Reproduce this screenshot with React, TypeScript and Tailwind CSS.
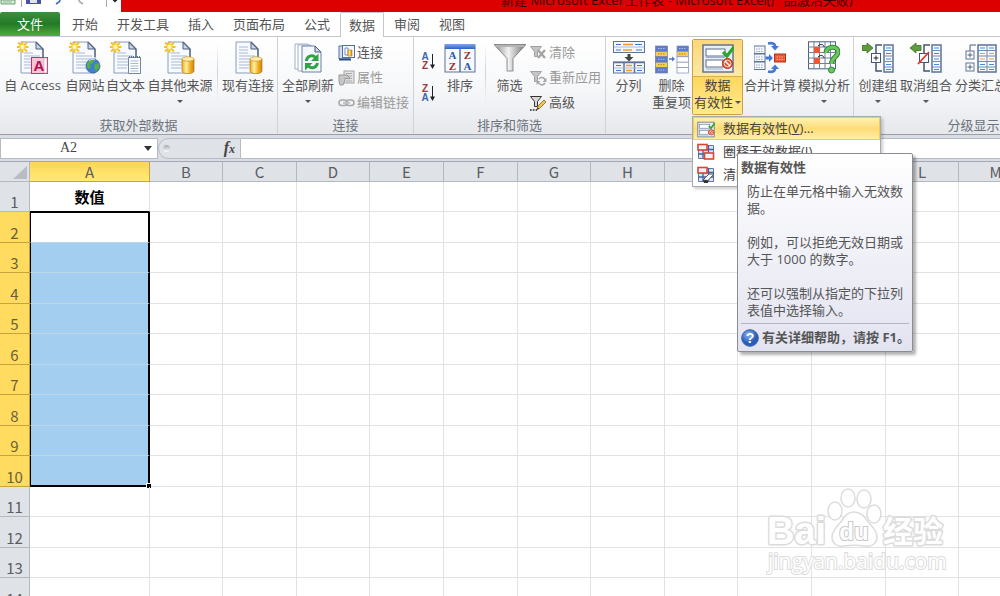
import type { ReactNode } from "react";
import clsx from "clsx";

const tabs = ["开始", "开发工具", "插入", "页面布局", "公式", "数据", "审阅", "视图"];
const activeTab = "数据";

const columns = "BCDEFGHIJKLMNOPQRSTUVWXYZ".split("");
// columns repeat 73/74px so the grid stays on whole pixels
const columnWidths = ["w-[73px]", "w-[74px]", "w-[73px]", "w-[74px]", "w-[74px]"];
const rows = Array.from({ length: 40 }, (_, i) => i + 1);

/* ---------- icons ---------- */

const Svg = ({ children, className = "w-8 h-[33px]", box = "0 0 32 33" }: { children: ReactNode; className?: string; box?: string }) => (
  <svg className={clsx("block shrink-0", className)} viewBox={box} fill="none" aria-hidden="true">
    {children}
  </svg>
);

const Sheet = ({ star = true }: { star?: boolean }) => (
  <>
    <path d="M4 1h15l7 7v24H4z" fill="#f7fafe" stroke="#8a9cb8" />
    <path d="M19 1v7h7z" fill="#c9d6ea" stroke="#4e5f7d" />
    <path d="M19 1l7 7v8" stroke="#4e5f7d" strokeWidth="1.3" />
    <path d="M7 12h9M7 15h16M7 18h16M7 21h16M7 24h16M7 27h10" stroke="#a9b9d4" />
    {star ? (
      <>
        <path d="M5.500 0v12M-.5 6h12M1 1.500l9 9M10 1.500l-9 9" stroke="#f5c21b" strokeWidth="1.800" />
        <circle cx="5.500" cy="6" r="2.500" fill="#fff8b8" stroke="#f8d84c" />
      </>
    ) : (
      <path d="M7 6h9M7 9h9" stroke="#a9b9d4" />
    )}
  </>
);

const Cylinder = () => (
  <>
    <path d="M18 18v12c0 3.500 12 3.500 12 0V18z" fill="url(#gold)" stroke="#b87d12" strokeWidth=".7" />
    <ellipse cx="24" cy="18" rx="6" ry="2.200" fill="#fff0b0" stroke="#c9922a" strokeWidth=".7" />
  </>
);

const Gradients = () => (
  <svg className="absolute w-0 h-0" aria-hidden="true">
    <defs>
      <linearGradient id="gold">
        <stop stopColor="#f0a91c" />
        <stop offset=".35" stopColor="#fff0a0" />
        <stop offset=".7" stopColor="#f0ad22" />
        <stop offset="1" stopColor="#c98510" />
      </linearGradient>
      <linearGradient id="steel">
        <stop stopColor="#8c8c8c" />
        <stop offset=".45" stopColor="#f2f2f2" />
        <stop offset="1" stopColor="#6e6e6e" />
      </linearGradient>
      <linearGradient id="blueBar" x2="0" y2="1">
        <stop stopColor="#7fa8ee" />
        <stop offset="1" stopColor="#2c62c4" />
      </linearGradient>
      <radialGradient id="help" cx=".4" cy=".3">
        <stop stopColor="#8fb4f0" />
        <stop offset="1" stopColor="#2a5bb8" />
      </radialGradient>
    </defs>
  </svg>
);

const AccessIcon = () => (
  <Svg>
    <Sheet />
    <rect x="14.500" y="16.500" width="16" height="16" fill="#f9c4d6" stroke="#c4326a" />
    <path d="M27 17h3v15h-3z" fill="#fff" stroke="#e08aa8" strokeWidth=".6" />
    <text x="22" y="30" fontFamily="Liberation Sans, sans-serif" fontWeight="bold" fontSize="15" textAnchor="middle" fill="#b0104e">
      A
    </text>
  </Svg>
);

const WebIcon = () => (
  <Svg>
    <Sheet />
    <circle cx="24" cy="25" r="7" fill="#3f7fd2" stroke="#285a9c" strokeWidth=".7" />
    <path d="M19 21c2-3 5-3 6-2l-1 3-3 1 1 3-2 2c-2-1-3-4-1-7zM26 23l4-1c1 3 0 6-3 8l-2-3z" fill="#57b041" />
    <path d="M20 20c2-2 4-2 6-1" stroke="#c9e4ff" />
  </Svg>
);

const TextIcon = () => (
  <Svg>
    <Sheet />
    <path d="M18.500 16.500h12v16h-12z" fill="#fdfdfe" stroke="#7388a8" />
    <path d="M19 16h12" stroke="#5c6f8e" strokeWidth="2" strokeDasharray="1 1" />
    <path d="M20.500 20h8M20.500 22.500h8M20.500 25h8M20.500 27.500h8M20.500 30h8" stroke="#a9b9d4" />
  </Svg>
);

const SourcesIcon = ({ star = true }: { star?: boolean }) => (
  <Svg>
    <Sheet star={star} />
    <Cylinder />
  </Svg>
);

const RefreshIcon = () => (
  <Svg>
    <path d="M3 3h13v25H3z" fill="#fff" stroke="#9fb0cb" />
    <path d="M6 4h13v26H6z" fill="#fff" stroke="#9fb0cb" />
    <path d="M10 5h13l6 6v20H10z" fill="#f4f8fd" stroke="#6b80a3" />
    <path d="M23 5v6h6z" fill="#c9d6ea" stroke="#4e5f7d" />
    <path d="M14.500 20c0-5 6-7 9-3.500" stroke="#2ca444" strokeWidth="3" />
    <path d="M26.500 12.500v7.500h-7.500z" fill="#2ca444" />
    <path d="M25.500 22c-1 5-6 6-9 3" stroke="#2ca444" strokeWidth="3" />
    <path d="M13 29.500v-7.500h7.500z" fill="#2ca444" />
  </Svg>
);

const SortIcon = () => (
  <Svg>
    <rect x="1" y="4" width="30" height="27" fill="#f6f9fe" stroke="#5d7298" />
    <rect x="1" y="3" width="30" height="5" fill="url(#blueBar)" />
    <path d="M16 8v23" stroke="#5d7298" strokeWidth="1.500" />
    <g fontFamily="Liberation Serif, serif" fontWeight="bold" fontSize="11" textAnchor="middle">
      <text x="8.500" y="18" fill="#2d55a6">A</text>
      <text x="8.500" y="28.500" fill="#a02c2c">Z</text>
      <text x="23.500" y="18" fill="#a02c2c">Z</text>
      <text x="23.500" y="28.500" fill="#2d55a6">A</text>
    </g>
  </Svg>
);

const SortOrder = ({ top, bottom }: { top: string; bottom: string }) => (
  <Svg className="w-4 h-5" box="0 0 16 20">
    <g fontFamily="Liberation Sans, sans-serif" fontWeight="bold" fontSize="10" textAnchor="middle">
      <text x="5" y="9" fill={top === "A" ? "#4266ac" : "#a13a40"}>{top}</text>
      <text x="5" y="18" fill={bottom === "A" ? "#4266ac" : "#a13a40"}>{bottom}</text>
    </g>
    <path d="M12.500 3v14" stroke="#222" />
    <path d="M10 13.500h5l-2.500 4.500z" fill="#222" />
  </Svg>
);

const FunnelIcon = () => (
  <Svg>
    <path d="M0 3.500h32L19 17.500v12.500h-6V17.500z" fill="url(#steel)" stroke="#777" strokeWidth=".8" />
    <path d="M1 4h30l-1.500 2h-27z" fill="#b4b4b4" />
  </Svg>
);

const SplitIcon = () => (
  <Svg>
    <rect x=".5" y=".5" width="31" height="11" fill="#f4f8fd" stroke="#5d7298" />
    <path d="M1 6h30" stroke="#a8b9d4" />
    <path d="M3 3.500h5M22 3.500h7M3 9h5M23 9h6" stroke="#3c76d8" strokeWidth="1.200" />
    <path d="M10 3.500h10M10 9h9" stroke="#f39a22" strokeWidth="1.500" />
    <path d="M16 13v5" stroke="#444" strokeWidth="3" />
    <path d="M11.500 16h9L16 20.500z" fill="#444" />
    <rect x=".5" y="21" width="31" height="11" fill="#f4f8fd" stroke="#5d7298" />
    <path d="M0 21.500h32M11 21v11M21.500 21v11" stroke="#5d7298" strokeWidth="1.500" />
    <path d="M1 27h30" stroke="#a8b9d4" />
    <path d="M3 24.500h5M3 29.500h5M24 24.500h5M24 29.500h5" stroke="#3c76d8" strokeWidth="1.200" />
    <path d="M13 24.500h6M13 29.500h6" stroke="#f39a22" strokeWidth="1.500" />
  </Svg>
);

const DuplicatesIcon = () => (
  <Svg className="w-[34px] h-[33px]" box="0 0 34 33">
    {["#5c7cd0", "#f7cf4a", "#5c7cd0", "#f7cf4a", "#5c7cd0"].map((fill, i) => (
      <g key={i}>
        <rect x=".5" y={5 + i * 5.4} width="12" height="5.400" fill={fill} stroke="#6f7ca6" strokeWidth=".7" />
        <path d={`M3 ${7.5 + i * 5.4}h7`} stroke={fill === "#f7cf4a" ? "#b08a1c" : "#a9bcf0"} strokeDasharray="1.500 1" />
      </g>
    ))}
    <path d="M14 18h5" stroke="#4f76d6" strokeWidth="1.500" />
    <path d="M17 15.500v5l3-2.500z" fill="#4f76d6" />
    {["#5c7cd0", "#f7cf4a", "#fff", "#fff", "#fff"].map((fill, i) => (
      <rect key={i} x="22" y={5 + i * 5.4} width="11.500" height="5.400" fill={fill} stroke="#7f8fb4" strokeWidth=".7" />
    ))}
    <path d="M24 7.500h7" stroke="#a9bcf0" strokeDasharray="1.500 1" />
    <path d="M24 13h7" stroke="#b08a1c" strokeDasharray="1.500 1" />
  </Svg>
);

const ValidationIcon = ({ className }: { className?: string }) => (
  <Svg className={className}>
    <rect x="1" y="4" width="30" height="27" fill="#e8eef8" stroke="#5c6c8c" strokeWidth="1.400" />
    <rect x="4" y="8" width="19" height="7" fill="#fff" stroke="#5c6c8c" />
    <rect x="4" y="19" width="17" height="7" fill="#fff" stroke="#5c6c8c" />
    <path d="M4 16.500h19M4 28h17" stroke="#9fb0cb" />
    <path d="M21 11l4 4 7-9" stroke="#2ea52c" strokeWidth="3.200" />
    <circle cx="25.500" cy="22.500" r="5" fill="#e9502d" stroke="#b73518" />
    <path d="M23 20l5 5" stroke="#fff" strokeWidth="1.400" />
    <circle cx="25.500" cy="22.500" r="3.300" stroke="#fff" strokeWidth=".8" />
  </Svg>
);

const ConsolidateIcon = () => (
  <Svg>
    {[5, 13, 21].map((y) => (
      <g key={y}>
        <rect x="0" y={y} width="11" height="7.500" fill="#f4f8fd" stroke="#5d7298" />
        <path d={`M2 ${y + 3}h7M2 ${y + 5.5}h7`} stroke="#9aa9c2" strokeDasharray="1.500 1" />
      </g>
    ))}
    <path d="M14 2.500c4-1 7 0 7 3" stroke="#4277d4" strokeWidth="2.600" />
    <path d="M17 5h8l-4 4.500z" fill="#4277d4" />
    <path d="M14 30.500c4 1 7 0 7-3" stroke="#4277d4" strokeWidth="2.600" />
    <path d="M17 28h8l-4-4.500z" fill="#4277d4" />
    <path d="M11.500 17h4" stroke="#4277d4" strokeWidth="3" />
    <path d="M15 13l4 4-4 4z" fill="#4277d4" />
    <rect x="20.500" y="13" width="11" height="8" fill="#ee5532" stroke="#b13418" />
    <path d="M22.500 16h8M22.500 18.500h8" stroke="#fbb39c" strokeDasharray="1.500 1" />
  </Svg>
);

const WhatIfIcon = () => (
  <Svg>
    <rect x=".5" y=".8" width="27" height="27" fill="#fdfdfe" stroke="#4c5f80" />
    <path d="M0 6h28M0 11.500h28M0 17h28M0 22.500h28M6 0v28M11.500 0v28M17 0v28M22.500 0v28" stroke="#6f819f" />
    <rect x="6" y="6" width="6" height="6" fill="#ee5532" />
    <rect x="6" y="17" width="6" height="6" fill="#ee5532" />
    <path d="M10 5c3-3 6-1 6 1M10 16c3-3 6-1 6 1" stroke="#222" />
    <path d="M18 12c0-7 12-8 12-1 0 5-6.500 5-6.500 12" stroke="#2f8a34" strokeWidth="5" />
    <path d="M18 12c0-7 12-8 12-1 0 5-6.500 5-6.500 12" stroke="#6cc65c" strokeWidth="3" />
    <circle cx="23.500" cy="29" r="3" fill="#6cc65c" stroke="#2f8a34" />
  </Svg>
);

const OutlineIcon = ({ kind }: { kind: "group" | "ungroup" | "subtotal" }) => (
  <Svg>
    {kind === "subtotal" ? (
      <>
        <rect x="13" y="4" width="18" height="27" fill="#f6f9fe" stroke="#5d7298" strokeWidth="1.500" />
        <path d="M13 9.500h18M13 15h18M13 20.500h18M13 26h18M22 4v27" stroke="#7589aa" />
        <path d="M15 7h5M24 7h5M15 23.500h5M24 23.500h5M15 28.500h5M24 28.500h5" stroke="#4a87e6" />
        <path d="M15 12.500h5M24 12.500h5M15 18h5M24 18h5" stroke="#f2a13a" />
        <rect x="1" y="10" width="8" height="8" fill="#fff" stroke="#5d7298" />
        <rect x="1" y="22" width="8" height="8" fill="#fff" stroke="#5d7298" />
        <path d="M5 4v6M5 4h6M2.500 14h5M5 11.500v5M2.500 26h5M5 23.500v5" stroke="#4c5f80" />
      </>
    ) : (
      <>
        <rect x="22" y="4" width="9" height="27" fill="#f6f9fe" stroke="#5d7298" strokeWidth="1.500" />
        <path d="M22 9.500h9M22 15h9M22 20.500h9M22 26h9" stroke="#7589aa" />
        <path d="M24 7h5M24 12.500h5M24 18h5M24 23.500h5M24 28.500h5" stroke="#4a87e6" />
        <path d="M20 4h-6v8M20 30h-6v-8" stroke="#44546f" strokeWidth="1.500" />
        <rect x="9.500" y="12.500" width="9" height="9" fill="#fff" stroke="#44546f" />
        <path
          d={kind === "group" ? "M0 4.500h5V2l6 5-6 5V9.500H0z" : "M11 4.500H6V2L0 7l6 5V9.500h5z"}
          fill="#5f9d3c"
          stroke="#39701e"
          strokeWidth=".8"
        />
        {kind === "group" ? <path d="M11.500 17h5M14 14.500v5" stroke="#222" /> : <path d="M8 23l11-12" stroke="#e3342b" strokeWidth="1.800" />}
      </>
    )}
  </Svg>
);

const smallIcon = "w-[17px] h-4";

const ConnectionIcon = () => (
  <Svg className={smallIcon} box="0 0 17 16">
    <path d="M1 1h10v13H1z" fill="#cfe0f6" stroke="#54709f" />
    <rect x="4.500" y=".5" width="12" height="12" fill="#f4f8fd" stroke="#54709f" />
    <path d="M7 3h3v7H7z" fill="#fff" stroke="#7c8fae" />
    <path d="M10 5h4v6h-4z" fill="url(#gold)" stroke="#b87d12" strokeWidth=".6" />
    <path d="M1 14.500h12" stroke="#2d4d85" strokeWidth="2" />
  </Svg>
);

const PropertiesIcon = () => (
  <Svg className={smallIcon} box="0 0 17 16">
    <rect x="6" y="1" width="10" height="12" fill="#e4e4e4" stroke="#a4a4a4" />
    <path d="M8 3.500h6M8 6h6M8 8.500h6M8 11h6" stroke="#a9a9a9" />
    <path d="M1 5h8l3 3-1 1-4-1v2l-2 5H2l-1-4z" fill="#c8c8c8" stroke="#989898" />
  </Svg>
);

const LinksIcon = () => (
  <Svg className={smallIcon} box="0 0 17 16">
    <rect x="1" y="5" width="8" height="5.500" rx="2.700" stroke="#a8a8a8" strokeWidth="1.600" />
    <rect x="8" y="5" width="8" height="5.500" rx="2.700" stroke="#a8a8a8" strokeWidth="1.600" />
    <path d="M5 7.800h7" stroke="#c0c0c0" strokeWidth="2" />
  </Svg>
);

const FilterSmallIcon = ({ kind }: { kind: "clear" | "reapply" | "advanced" }) => (
  <Svg className={smallIcon} box="0 0 17 16">
    <path
      d="M.5 1.500h11L7.500 6.500v5h-3v-5z"
      fill={kind === "advanced" ? "#d8d8d8" : "#c4c4c4"}
      stroke={kind === "advanced" ? "#333" : "#a0a0a0"}
    />
    {kind === "clear" && <path d="M8 5l7 8M15 5l-7 8" stroke="#a4a4a4" strokeWidth="2.400" />}
    {kind === "reapply" && (
      <>
        <path d="M9 9c2-3 6-1 6 1M15 13c-2 3-6 2-7-1" stroke="#a8a8a8" strokeWidth="1.600" />
        <path d="M16.500 8v4h-4zM6.500 15v-4h4z" fill="#a8a8a8" />
      </>
    )}
    {kind === "advanced" && (
      <>
        <path d="M7 14.500l1-3.500 6-6 2 2-6 6z" fill="#f5c350" stroke="#84611f" strokeWidth=".8" />
        <path d="M7 14.500l.8-2 1.400 1.200z" fill="#222" />
        <path d="M0 15h7" stroke="#222" strokeWidth="1.600" strokeDasharray="1.600 1.200" />
      </>
    )}
  </Svg>
);

const CircleDataIcon = ({ erase = false }: { erase?: boolean }) => (
  <Svg className="w-[18px] h-[18px]" box="0 0 18 18">
    <path d="M1.500 2.500h15v13h-15z" fill="#dce6f6" stroke="#62779c" />
    <path d="M1 6.500h16M1 11h16M6 2v14M11.500 2v14" stroke="#4a62a0" strokeWidth="1.300" />
    <rect x="1" y="1.500" width="9" height="5.500" fill="#eef3fb" stroke="#d9472f" strokeWidth="1.600" />
    {erase ? (
      <>
        <path d="M6 14l6-6h5l-6 6.500z" fill="#fff" stroke="#555" />
        <path d="M6 14l5 .5v2.500H7z" fill="#333" />
      </>
    ) : (
      <rect x="7.500" y="10" width="9" height="6" fill="#eef3fb" stroke="#d9472f" strokeWidth="1.600" />
    )}
  </Svg>
);

const Caret = ({ className = "mt-[6px]" }: { className?: string }) => (
  <span className={clsx("block shrink-0 w-0 h-0 border-x-[3px] border-t-[3px] border-x-transparent border-t-[#555]", className)} />
);

/* ---------- ribbon ---------- */

type BigButtonProps = { icon: ReactNode; label: string; width: string; caret?: boolean };

const BigButton = ({ icon, label, width, caret = false }: BigButtonProps) => (
  <button className={clsx("flex flex-col items-center shrink-0 h-[77px] pt-[2px] whitespace-nowrap leading-[17px]", width)}>
    {icon}
    <span className="mt-[3px] whitespace-pre-line">{label}</span>
    {caret && <Caret />}
  </button>
);

const SmallButton = ({ icon, label, disabled = false }: { icon: ReactNode; label: string; disabled?: boolean }) => (
  <button className="flex items-center gap-[2px] h-6 whitespace-nowrap disabled:text-[#9a9a9a]" disabled={disabled}>
    {icon}
    {label}
  </button>
);

const Group = ({ title, width, children }: { title: string; width: string; children: ReactNode }) => (
  <section className={clsx("flex flex-col justify-between shrink-0 border-r border-[#cfd3d9] pt-[2px]", width)} aria-label={title}>
    <div className="flex">{children}</div>
    <h2 className="text-center text-[#6c727c] leading-[18px]">{title}</h2>
  </section>
);

const SmallButtons = ({ children }: { children: ReactNode }) => <div className="flex flex-col items-start gap-px pt-[2px]">{children}</div>;

const Divider = () => <div className="shrink-0 w-px h-[60px] mt-1 mx-[3px] bg-linear-to-b from-transparent via-[#cfd3d9] to-transparent" />;

const ValidationTooltip = () => (
  <div
    role="tooltip"
    className="absolute left-11 top-9 w-[176px] px-[3px] border border-[#8a8d94] rounded-[2px] bg-linear-to-b from-white to-[#e2e3f0] shadow-[3px_3px_3px_rgba(0,0,0,0.3)] text-[#555] leading-[17px]"
  >
    <h3 className="font-bold pt-[5px]">数据有效性</h3>
    <div className="flex flex-col gap-[17px] pl-[6px] pt-[7px] w-[164px]">
      <p>防止在单元格中输入无效数据。</p>
      <p>例如，可以拒绝无效日期或大于 1000 的数字。</p>
      <p>还可以强制从指定的下拉列表值中选择输入。</p>
    </div>
    <div className="flex items-center gap-[3px] mt-1 h-7 border-t border-[#b3b5c0] font-bold whitespace-nowrap">
      <Svg className="w-[18px] h-[18px]" box="0 0 18 18">
        <circle cx="9" cy="9" r="8.300" fill="url(#help)" stroke="#3560ad" />
        <text x="9" y="14" fontFamily="Liberation Sans, sans-serif" fontWeight="bold" fontSize="14" textAnchor="middle" fill="#fff">
          ?
        </text>
      </Svg>
      有关详细帮助，请按 F1。
    </div>
  </div>
);

const menuItem = "flex items-center h-[23px] w-full pl-1 gap-2 text-left whitespace-nowrap";

const ValidationMenu = () => (
  <div
    role="menu"
    className="absolute z-10 left-0 top-full w-[189px] border border-[#a7abb0] bg-white shadow-[2px_2px_3px_rgba(0,0,0,0.2)] text-[#444]"
  >
    <button role="menuitem" className={clsx(menuItem, "bg-linear-to-b from-[#fff3b4] via-[#fddc78] to-[#fff0a8] ring-1 ring-inset ring-[#f0cc60]")}>
      <ValidationIcon className="w-[18px] h-[18px]" />
      <span>数据有效性(<u>V</u>)...</span>
    </button>
    <button role="menuitem" className={menuItem}>
      <CircleDataIcon />
      <span>圈释无效数据(<u>I</u>)</span>
    </button>
    <button role="menuitem" className={menuItem}>
      <CircleDataIcon erase />
      <span>清除无效数据标识圈(<u>R</u>)</span>
    </button>
    <ValidationTooltip />
  </div>
);

const ValidationButton = () => (
  <div className="relative shrink-0 w-[51px] h-[77px]">
    <button className="flex flex-col w-full h-[76px] border border-[#c7a04a] rounded-[2px] whitespace-nowrap leading-[17px] text-[#444]">
      <span className="flex justify-center w-full h-[37px] pt-px border-b border-[#d9b04c] bg-linear-to-b from-[#fbd67c] to-[#fde9a4]">
        <ValidationIcon />
      </span>
      <span className="block w-full grow bg-linear-to-b from-[#ffd75e] to-[#ffe98c]">
        <span className="block text-center">数据</span>
        <span className="flex items-center justify-center gap-[2px]">
          有效性
          <Caret className="" />
        </span>
      </span>
    </button>
    <ValidationMenu />
  </div>
);

const Ribbon = () => (
  <div className="flex shrink-0 h-[98px] border-b border-[#9a9fa9] bg-linear-to-b from-white via-[#f7f8fa] to-[#e6e8ec]">
    <Group title="获取外部数据" width="w-[278px]">
      <BigButton icon={<AccessIcon />} label="自 Access" width="w-[65px]" />
      <BigButton icon={<WebIcon />} label="自网站" width="w-10" />
      <BigButton icon={<TextIcon />} label="自文本" width="w-[41px]" />
      <BigButton icon={<SourcesIcon />} label="自其他来源" width="w-[68px]" caret />
      <Divider />
      <BigButton icon={<SourcesIcon star={false} />} label="现有连接" width="w-[54px]" />
    </Group>
    <Group title="连接" width="w-[136px]">
      <BigButton icon={<RefreshIcon />} label="全部刷新" width="w-[60px]" caret />
      <SmallButtons>
        <SmallButton icon={<ConnectionIcon />} label="连接" />
        <SmallButton icon={<PropertiesIcon />} label="属性" disabled />
        <SmallButton icon={<LinksIcon />} label="编辑链接" disabled />
      </SmallButtons>
    </Group>
    <Group title="排序和筛选" width="w-[192px]">
      <div className="flex flex-col gap-3 pl-[6px] pt-3 w-6 shrink-0">
        <button aria-label="升序">
          <SortOrder top="A" bottom="Z" />
        </button>
        <button aria-label="降序">
          <SortOrder top="Z" bottom="A" />
        </button>
      </div>
      <BigButton icon={<SortIcon />} label="排序" width="w-11" />
      <Divider />
      <BigButton icon={<FunnelIcon />} label="筛选" width="w-[41px]" />
      <SmallButtons>
        <SmallButton icon={<FilterSmallIcon kind="clear" />} label="清除" disabled />
        <SmallButton icon={<FilterSmallIcon kind="reapply" />} label="重新应用" disabled />
        <SmallButton icon={<FilterSmallIcon kind="advanced" />} label="高级" />
      </SmallButtons>
    </Group>
    <Group title="" width="w-[248px]">
      <BigButton icon={<SplitIcon />} label="分列" width="w-[45px]" />
      <BigButton icon={<DuplicatesIcon />} label={"删除\n重复项"} width="w-[41px]" />
      <ValidationButton />
      <BigButton icon={<ConsolidateIcon />} label="合并计算" width="w-[54px]" />
      <BigButton icon={<WhatIfIcon />} label="模拟分析" width="w-[54px]" caret />
    </Group>
    <Group title="分级显示" width="w-[240px]">
      <div className="flex pl-1">
        <BigButton icon={<OutlineIcon kind="group" />} label="创建组" width="w-10" caret />
        <BigButton icon={<OutlineIcon kind="ungroup" />} label="取消组合" width="w-[56px]" caret />
        <BigButton icon={<OutlineIcon kind="subtotal" />} label="分类汇总" width="w-[54px]" />
      </div>
    </Group>
  </div>
);

/* ---------- window chrome ---------- */

const TitleBar = () => (
  <header className="flex shrink-0 h-3 overflow-hidden">
    <div className="flex w-[121px] shrink-0">
      <Svg className="w-[121px] h-3" box="0 0 121 12">
        <path d="M1 0h14v4H1z" fill="#d9efd6" stroke="#6d9c74" />
        <path d="M3 2h9" stroke="#8fb897" />
        <path d="M21.500 0v7M106.500 0v7" stroke="#a8a8a8" />
        <path d="M26 0h15v4H26z" fill="#4a4fae" />
        <path d="M30 0h7v3h-7z" fill="#dfe4f6" />
        <path d="M60 0c0 2-2 3-4 4" stroke="#3d68c4" strokeWidth="1.600" />
        <path d="M79 0c0 2 2 3 4 4" stroke="#aaa" strokeWidth="1.600" />
        <path d="M112.500 0h5L115 2.500z" fill="#222" />
      </Svg>
    </div>
    <div className="flex grow items-end pb-1 pl-[380px] bg-[#dd0000]">
      <h1 className="text-[13px] leading-4 whitespace-pre text-[#3a0000]">新建 Microsoft Excel 工作表 - Microsoft Excel(产品激活失败)</h1>
    </div>
  </header>
);

const TabBar = () => (
  <nav className="flex shrink-0 h-[25px] gap-px border-b border-[#c3c7cd] leading-6">
    <button className="w-[60px] mr-[2px] shrink-0 rounded-t-[2px] text-white bg-linear-to-b from-[#3c8f3c] via-[#237a26] to-[#4fae3c]">文件</button>
    {tabs.map((tab) => (
      <button
        key={tab}
        className={clsx(
          "shrink-0",
          tab === activeTab ? "h-[25px] px-2 pb-px border-x border-t border-[#c3c7cd] rounded-t-[2px] bg-white leading-[22px]" : "px-[9px]",
        )}
      >
        {tab}
      </button>
    ))}
  </nav>
);

const FormulaBar = () => (
  <div className="flex shrink-0 items-center h-[27px] bg-[#dadde3] border-b border-[#a3a8b2]">
    <div className="flex items-center w-[158px] h-[21px] shrink-0 bg-white border border-[#b7bbc3] pr-[5px]">
      <input
        aria-label="名称框"
        defaultValue="A2"
        className="w-full min-w-0 pr-2 text-center text-sm text-[#444] font-['Liberation_Serif',serif] outline-none"
      />
      <span className="shrink-0 w-0 h-0 border-x-4 border-t-[5px] border-x-transparent border-t-[#333]" />
    </div>
    <div className="flex items-center justify-between w-[83px] h-[21px] shrink-0 pl-1 pr-[5px] rounded-l-full border border-[#b7bbc3] bg-[#dfe2e6]">
      <span className="w-[7px] h-[7px] rounded-full bg-linear-to-b from-[#a5a8ad] to-white" />
      <button aria-label="插入函数" className="font-['Liberation_Serif',serif] italic font-bold text-base leading-4 text-[#444]">
        f<span className="text-xs">x</span>
      </button>
    </div>
    <input aria-label="编辑栏" className="grow min-w-0 h-[21px] bg-white border-y border-[#b7bbc3] outline-none" />
  </div>
);

/* ---------- grid ---------- */

const isSelected = (row: number) => row >= 2 && row <= 10;

const Grid = () => (
  <table className="table-fixed w-[1990px] border-separate border-spacing-0 font-['Noto_Sans_CJK_SC',sans-serif]">
    <thead>
      <tr className="h-5 text-[15px] leading-[18px] text-[#5a5d62]">
        <th className="w-[30px] p-0 bg-[#dfe2e6] border-r border-b border-[#b4b8bf]">
          <Svg className="w-[29px] h-[19px]" box="0 0 29 19">
            <path d="M27 4v13H13z" fill="#b9bdc3" />
          </Svg>
        </th>
        <th className="w-[120px] p-0 font-normal bg-linear-to-b from-[#ffd35a] to-[#ffec72] border-r border-b border-[#c9a23e]">A</th>
        {columns.map((name, i) => (
          <th key={name} className={clsx("p-0 font-normal bg-[#dfe2e6] border-r border-b border-[#b4b8bf]", columnWidths[i % 5])}>
            {name}
          </th>
        ))}
      </tr>
    </thead>
    <tbody>
      {rows.map((row) => (
        <tr key={row} className="h-[30px] even:h-[31px]">
          <th
            className={clsx(
              "p-0 align-bottom font-normal text-[15px] leading-[18px] border-r border-b",
              isSelected(row) ? "bg-[#ffdb5f] border-[#c9a23e] text-[#6b5f3a]" : "bg-[#dfe2e6] border-[#b4b8bf] text-[#5a5d62]",
            )}
          >
            {row}
          </th>
          <td
            className={clsx(
              "relative p-0 text-center font-bold text-[15px] leading-5 text-black",
              row === 1 && "border-r border-r-[#e2e2e2] border-b border-b-black",
              row === 2 && "border-t bg-white",
              row > 2 && isSelected(row) && "bg-[#a4cef0]",
              isSelected(row) && "border-l border-r-2 border-l-black border-r-black border-t-black",
              isSelected(row) && (row === 10 ? "border-b-2 border-b-black" : "border-b border-b-[#bcd6ea]"),
              row > 10 && "border-r border-b border-[#e2e2e2]",
            )}
          >
            {row === 1 && "数值"}
            {row === 10 && <span className="absolute -right-[3px] -bottom-[3px] w-[5px] h-[5px] bg-black border-t border-l border-white" />}
          </td>
          {columns.map((name) => (
            <td key={name} className="p-0 border-r border-b border-[#e2e2e2]" />
          ))}
        </tr>
      ))}
    </tbody>
  </table>
);

const Watermark = () => (
  <svg className="absolute right-[50px] bottom-[18px] w-[184px] h-[92px]" viewBox="0 0 184 92" role="img" aria-label="Baidu 经验">
    <g fill="#fff" stroke="#dcdcdc" strokeWidth="1.500">
      <ellipse cx="69" cy="25" rx="7" ry="9" />
      <ellipse cx="82" cy="12" rx="7" ry="9" />
      <ellipse cx="98" cy="13" rx="7" ry="9" />
      <ellipse cx="108" cy="28" rx="7" ry="9" />
      <g strokeWidth="3" paintOrder="stroke" fontWeight="bold" strokeLinejoin="round">
        <text x="1" y="58" fontSize="38" fontFamily="Liberation Sans, sans-serif">Bai</text>
        <text x="117" y="56" fontSize="30" fontFamily="Noto Sans CJK SC, sans-serif">经验</text>
      </g>
      <path d="M88 26c8 0 11 6 15 11 5 5 8 9 8 14 0 7-6 10-12 9-8-1-14-1-21 0-6 1-12-2-12-9 0-5 3-9 8-14 4-5 6-11 14-11z" />
      <text x="88" y="54" fontSize="24" textAnchor="middle" fontWeight="bold" stroke="#c8c8c8" strokeWidth="2" paintOrder="stroke" fontFamily="Liberation Sans, sans-serif">
        du
      </text>
      <text x="2" y="83" fontSize="21" strokeWidth="2" paintOrder="stroke" fontFamily="Open Sans, sans-serif">jingyan.baidu.com</text>
    </g>
  </svg>
);

export default function App() {
  return (
    <div className="relative flex flex-col h-screen overflow-hidden bg-white text-[13px] text-[#555] font-['Open_Sans','Noto_Sans_CJK_SC',sans-serif]">
      <Gradients />
      <TitleBar />
      <TabBar />
      <Ribbon />
      <FormulaBar />
      <main className="relative grow min-h-0 overflow-hidden">
        <Grid />
        <Watermark />
      </main>
    </div>
  );
}
